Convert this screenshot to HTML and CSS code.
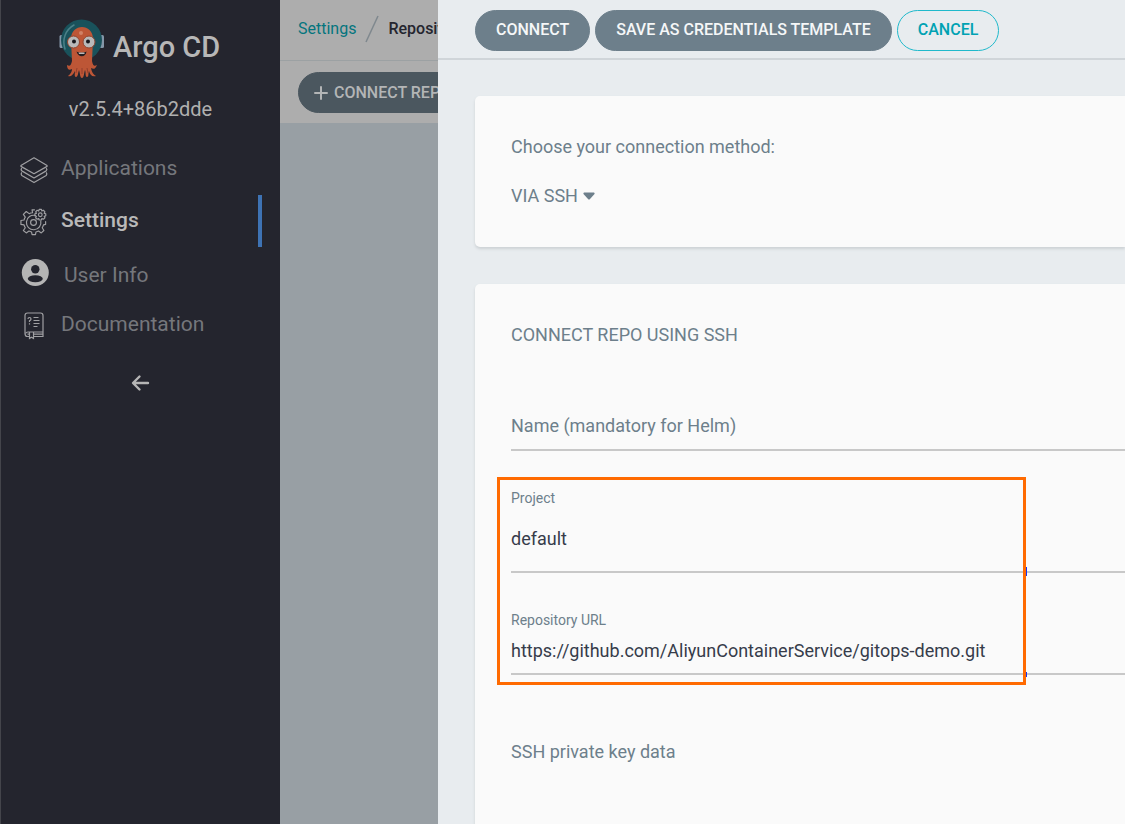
FILE: index.html
```html
<!DOCTYPE html>
<html lang="en">
<head>
<meta charset="utf-8">
<meta name="viewport" content="width=device-width, initial-scale=1">
<title>Repositories - Argo CD</title>
<link rel="stylesheet" href="styles.css">
</head>
<body>
<div class="app">
  <aside class="sidebar">
    <div class="brand">
      <svg class="brand-logo" width="46" height="60" viewBox="0 0 46 60" aria-hidden="true">
        <rect x="0.500" y="17" width="6" height="13" rx="1.500" fill="#8496a8"/>
        <rect x="39.500" y="17" width="5.500" height="13" rx="1.500" fill="#8496a8"/>
        <circle cx="22.500" cy="22" r="20.500" fill="#19525b"/>
        <path d="M6 31C3 22 6 12 15 7" fill="none" stroke="#4b8088" stroke-width="1.500" stroke-linecap="round"/>
        <path d="M12 21C12 5 34 5 34 21L33 43C34 49 36 48 38 47C36 52 34 51 32 50C33 55 35 57 37 58C33 59 31 57 30 53C29 56 30 59 28 59C26 59 27 54 26 52C25 55 25 60 23 60C21 60 21 55 20 52C19 55 19 59 17 59C15 59 16 55 16 53C14 57 12 59 9 58C12 56 13 53 13 51C10 53 8 51 8 47C11 49 12 47 13 43Z" fill="#bd5636"/>
        <path d="M18 50L17 55M23 50V56M28 50L29 55" stroke="#943f2c" stroke-width="1" fill="none"/>
        <circle cx="22" cy="15" r="2" fill="#d08267"/>
        <circle cx="14.500" cy="24" r="6" fill="#b9b9b9" stroke="#91452f" stroke-width="1"/>
        <circle cx="30" cy="24" r="6" fill="#b9b9b9" stroke="#91452f" stroke-width="1"/>
        <circle cx="15" cy="23.500" r="2" fill="#17171c"/>
        <circle cx="29" cy="23.500" r="2" fill="#17171c"/>
        <path d="M17.500 33.500C20 35 25 35 27.500 33.500C27 39.500 19 40 17.500 33.500Z" fill="#251d20"/>
        <path d="M19.500 34.500H25.500V36H20Z" fill="#b9b9b9"/>
      </svg>
      <span class="brand-name">Argo CD</span>
    </div>
    <div class="version">v2.5.4+86b2dde</div>
    <nav class="nav">
      <a class="nav-item" href="#applications">
        <svg width="30" height="30" viewBox="-1 -2.500 32 32" fill="none" stroke="#a0a0a3" stroke-width="1.300" stroke-linejoin="round" aria-hidden="true">
          <path d="M15 1.500L28.500 9.500Q29.500 10.300 28.500 11L15 18.500L1.500 11Q0.500 10.300 1.500 9.500Z"/>
          <path d="M2 12.500Q0.500 14 2 15.500L15 23L28 15.500Q29.500 14 28 12.500"/>
          <path d="M2 17Q0.500 18.800 2 20.500L15 28L28 20.500Q29.500 18.800 28 17"/>
        </svg>
        <span>Applications</span>
      </a>
      <a class="nav-item nav-item-active" href="#settings">
        <svg width="30" height="30" viewBox="0 -0.500 31 31" fill="none" stroke="#a0a0a3" stroke-width="1.200" stroke-linejoin="round" stroke-linecap="round" aria-hidden="true">
          <path d="M14 6.500L13.500 3.500M14 6.500Q12 6.600 10.500 7.400L7.500 5.200L4.500 8.200L6.500 11Q5.500 12.500 5.200 14L2 14.500V18.500L5.200 19Q5.500 20.500 6.500 22L4.500 24.800L7.500 27.300L10.300 25.400Q11.500 26 13 26.400L13.500 29H17L17.500 26.400Q19 26 20.200 25.400L23 27.300L25.700 24.800L24 22Q25 20.500 25.300 19L27.500 18.500V15.500M13.500 3.500H16"/>
          <path d="M17 9.300A7.500 7.500 0 1 0 22.500 15"/>
          <circle cx="15" cy="16.500" r="3"/>
          <circle cx="22" cy="8.500" r="1.900"/>
          <path d="M20.800 3H23.200L23.600 4.700L25.200 3.900L26.800 5.500L26 7.100L27.700 7.500V9.700L26 10.100L26.800 11.700L25.200 13.200L23.600 12.400L23.200 14H20.800L20.400 12.400L18.800 13.200L17.200 11.700L18 10.100L16.400 9.700V7.500L18 7.100L17.200 5.500L18.800 3.900L20.400 4.700Z"/>
        </svg>
        <span>Settings</span>
      </a>
      <a class="nav-item nav-item-user" href="#user-info">
        <svg width="30" height="30" viewBox="0 0 30 30" aria-hidden="true">
          <circle cx="16.300" cy="14.500" r="13.500" fill="#b5b5b5"/>
          <circle cx="16.300" cy="11.300" r="4.200" fill="#24252e"/>
          <ellipse cx="16.300" cy="20.800" rx="7.500" ry="3.500" fill="#24252e"/>
        </svg>
        <span>User Info</span>
      </a>
      <a class="nav-item" href="#documentation">
        <svg width="30" height="30" viewBox="0 0 30 30" fill="none" stroke="#a0a0a3" stroke-width="1.200" aria-hidden="true">
          <path d="M10 26.500H8.500Q6 26.500 6 23.500V5.500Q6 3 8.500 3H21.500Q24 3 24 5.500V26.500H15"/>
          <path d="M6.500 23.500Q7 22 9 22H24M15 24.200H24M8.500 24.200H10"/>
          <path d="M10.500 22V28.500L12.500 27.200L14.500 28.500V22"/>
          <path d="M9 9Q9 7.500 10.500 7.500T12 9Q12 10.200 10.500 10.800V12M10.500 13.200V14.500M14.500 7.500H19.500M14.500 10.500H20.500M14.500 13.500H20.500M14.500 16.500H18.500"/>
        </svg>
        <span>Documentation</span>
      </a>
    </nav>
    <button class="collapse" type="button" aria-label="Collapse sidebar">
      <svg width="20" height="18" viewBox="0 0 20 18" fill="none" stroke="#b5b5b5" stroke-width="2.400" stroke-linecap="round" stroke-linejoin="round" aria-hidden="true"><path d="M8.500 2.500L2 9L8.500 15.500M2.500 9H17"/></svg>
    </button>
  </aside>

  <main class="page">
    <header class="crumbs">
      <a class="crumb-link" href="#settings">Settings</a>
      <svg width="14" height="28" viewBox="0 0 14 28" fill="none" stroke="#7f888e" stroke-width="1.500" aria-hidden="true"><path d="M13 1L1 27"/></svg>
      <span class="crumb-current">Repositories</span>
    </header>
    <div class="toolbar">
      <button class="pill pill-dim" type="button">
        <svg width="14" height="14" viewBox="0 0 14 14" stroke="#b3b5b6" stroke-width="2" stroke-linecap="round" aria-hidden="true"><path d="M7 1V13M1 7H13"/></svg>
        Connect repo
      </button>
    </div>
  </main>
</div>

<section class="panel" aria-label="Connect repository">
  <header class="panel-actions">
    <button class="pill" type="button">Connect</button>
    <button class="pill" type="button">Save as credentials template</button>
    <button class="pill pill-outline" type="button">Cancel</button>
  </header>
  <form class="panel-body">
    <div class="card card-method">
      <label class="method-label" for="method">Choose your connection method:</label>
      <div class="method">
        <select id="method" class="method-select"><option>VIA SSH</option></select>
        <svg width="12" height="8" viewBox="0 0 12 8" aria-hidden="true"><path d="M1 0.500H11Q12 1 11.500 2L7 7Q6 8 5 7L0.500 2Q0 1 1 0.500Z" fill="#6d7f8b"/></svg>
      </div>
    </div>
    <div class="card card-repo">
      <h2 class="card-title">CONNECT REPO USING SSH</h2>
      <div class="field field-empty">
        <label class="hint" for="name">Name (mandatory for Helm)</label>
        <input class="input" id="name" type="text">
      </div>
      <div class="field field-project">
        <label class="caption" for="project">Project</label>
        <input class="input" id="project" type="text" value="default">
      </div>
      <div class="field field-url">
        <label class="caption" for="url">Repository URL</label>
        <input class="input" id="url" type="text" value="https://github.com/AliyunContainerService/gitops-demo.git">
      </div>
      <div class="field field-key">
        <label class="hint" for="key">SSH private key data</label>
        <textarea class="input" id="key" rows="2"></textarea>
      </div>
      <div class="highlight"><i class="tick tick-upper"></i><i class="tick tick-lower"></i></div>
    </div>
  </form>
</section>
</body>
</html>
```

FILE: styles.css
```css
* {
  box-sizing: border-box;
}

body {
  margin: 0;
  overflow: hidden;
  background: #989fa4;
  color: #363c4a;
  font-family: Roboto, "Liberation Sans", sans-serif;
  font-size: 18px;
  line-height: 24px;
}

button,
input,
select,
textarea {
  font: inherit;
  color: inherit;
}

a {
  text-decoration: none;
}

svg {
  display: block;
  flex: none;
}

.app {
  display: flex;
  min-height: 100vh;
}

/* Sidebar */
.sidebar {
  flex: none;
  width: 280px;
  padding-top: 18px;
  border-left: 1px solid #44454b;
  background: #24252e;
}

.brand {
  display: flex;
  align-items: center;
  gap: 8px;
  height: 60px;
  padding-left: 58px;
}

.brand-name {
  padding-bottom: 2px;
  color: #b7b7b7;
  font-size: 29px;
  font-weight: 500;
}

.version {
  padding-top: 19px;
  height: 65px;
  color: #b0b0b0;
  font-size: 20px;
  text-align: center;
}

.nav-item {
  display: flex;
  align-items: center;
  gap: 12px;
  height: 52px;
  margin-right: 18px;
  padding: 0 0 0 18px;
  color: #75777c;
  font-size: 21px;
}

.nav-item span {
  padding-bottom: 2px;
}

.nav-item-active {
  border-right: 4px solid #3e73b4;
  color: #b9b9b9;
  font-weight: 500;
}

.nav-item-user {
  gap: 15px;
}

.nav-item-user span {
  padding: 4px 0 0;
}

.collapse {
  display: block;
  margin: 23px auto 0;
  padding: 0;
  border: 0;
  background: none;
}

/* Page behind the panel */
.page {
  flex: 1;
  min-width: 0;
}

.crumbs {
  display: flex;
  align-items: center;
  gap: 9px;
  height: 61px;
  padding: 0 0 2px 18px;
  border-bottom: 1px solid #9ca1a3;
  background: #adadad;
  font-size: 16px;
}

.crumb-link {
  color: #04757e;
}

.crumb-current {
  color: #24252f;
  font-weight: 500;
}

.toolbar {
  height: 62px;
  padding: 11px 18px;
  background: #adadad;
}

.pill {
  display: flex;
  align-items: center;
  gap: 6px;
  height: 41px;
  padding: 0 20px;
  border: 1px solid #6d7f8b;
  border-radius: 21px;
  background: #6d7f8b;
  color: #f5f7f8;
  font-size: 16px;
  font-weight: 500;
  text-transform: uppercase;
  white-space: nowrap;
}

.pill-outline {
  border-color: #1fb9cb;
  background: none;
  color: #00a2b3;
}

.pill-dim {
  padding: 0 15px;
  border-color: #4b575f;
  background: #4b575f;
  color: #b3b5b6;
}

/* Sliding panel */
.panel {
  position: fixed;
  inset: 0 0 0 438px;
  overflow: hidden;
  background: #e8ecef;
}

.panel-actions {
  display: flex;
  align-items: center;
  gap: 5px;
  height: 60px;
  padding: 2px 0 0 37px;
  border-bottom: 2px solid #d0d5d9;
}

.panel-body {
  display: flex;
  flex-direction: column;
  gap: 37px;
  padding: 36px 0 0 37px;
}

.card {
  position: relative;
  border-radius: 5px 0 0 5px;
  background: #fafafa;
  box-shadow: 0 2px 3px #ccd1d4;
  color: #6d7f8b;
}

.card-method {
  padding: 39px 36px;
}

.method-label {
  display: block;
  margin-bottom: 25px;
}

.method {
  display: flex;
  align-items: center;
  gap: 5px;
}

.method-select {
  height: 24px;
  padding: 0;
  border: 0;
  appearance: none;
  background: none;
}

.card-repo {
  padding: 39px 0 36px 36px;
}

.card-title {
  margin: 0 0 60px;
  font-size: 18px;
  font-weight: 400;
}

.field {
  display: grid;
}

.input {
  width: 100%;
  height: 37px;
  padding: 0 0 11px;
  border: 0;
  border-bottom: 2px solid #c8c8c8;
  border-radius: 0;
  outline: 0;
  background: none;
  color: #363c4a;
}

.hint,
.field-empty .input,
.field-key .input {
  grid-area: 1 / 1;
}

.field-empty,
.field-key {
  padding-top: 7px;
}

.caption {
  font-size: 14px;
  line-height: 20px;
}

.field-project {
  gap: 18px;
  padding-top: 37px;
}

.field-project .input {
  height: 47px;
  padding-bottom: 21px;
}

.field-url {
  gap: 8px;
  padding-top: 37px;
}

.field-key {
  padding-top: 65px;
}

.field-key .input {
  height: 120px;
  resize: none;
}

/* Marked area */
.highlight {
  position: absolute;
  top: 193px;
  left: 22px;
  width: 529px;
  height: 208px;
  border: 3px solid #ff6a00;
  pointer-events: none;
}

.tick {
  position: absolute;
  right: -4px;
  width: 1px;
  background: #1433f5;
}

.tick-upper {
  top: 87px;
  height: 9px;
}

.tick-lower {
  bottom: 5px;
  height: 5px;
}
```
